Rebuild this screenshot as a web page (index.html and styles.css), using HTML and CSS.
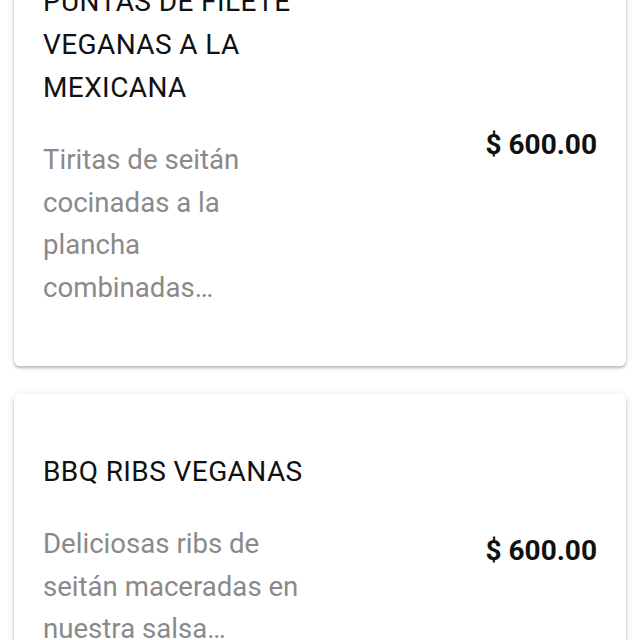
FILE: index.html
```html
<!DOCTYPE html>
<html lang="es">
<head>
<meta charset="utf-8">
<link rel="stylesheet" href="styles.css">
</head>
<body>
<div class="list">
  <div class="card">
    <div class="info">
      <div class="title">PUNTAS DE FILETE VEGANAS A LA MEXICANA</div>
      <div class="desc">Tiritas de seitán cocinadas a la plancha combinadas…</div>
    </div>
    <div class="price">$ 600.00</div>
  </div>
  <div class="card">
    <div class="info">
      <div class="title">BBQ RIBS VEGANAS</div>
      <div class="desc">Deliciosas ribs de seitán maceradas en nuestra salsa…</div>
    </div>
    <div class="price">$ 600.00</div>
  </div>
</div>
</body>
</html>
```

FILE: styles.css
```css
html, body {
  margin: 0;
  padding: 0;
  background: #ffffff;
  overflow: hidden;
}
body {
  font-family: Roboto, "Noto Sans", sans-serif;
}
.list {
  display: flex;
  flex-direction: column;
  gap: 28px;
  padding: 0 14px;
  margin-top: -76px;
}
.card {
  background: #fff;
  border-radius: 6px;
  box-shadow: 0 2px 3px rgba(0,0,0,0.26), 0 0 7px rgba(0,0,0,0.09);
  padding: 56px 29px 57px;
  display: grid;
  grid-template-columns: 265px 1fr;
  align-items: center;
}
.title {
  font-size: 28px;
  letter-spacing: 0.4px;
  line-height: 43px;
  color: #111;
}
.desc {
  margin-top: 30px;
  font-size: 27.6px;
  line-height: 42.5px;
  color: #8a8a8a;
}
.price {
  text-align: right;
  font-size: 28px;
  font-weight: 700;
  color: #111;
}
```
